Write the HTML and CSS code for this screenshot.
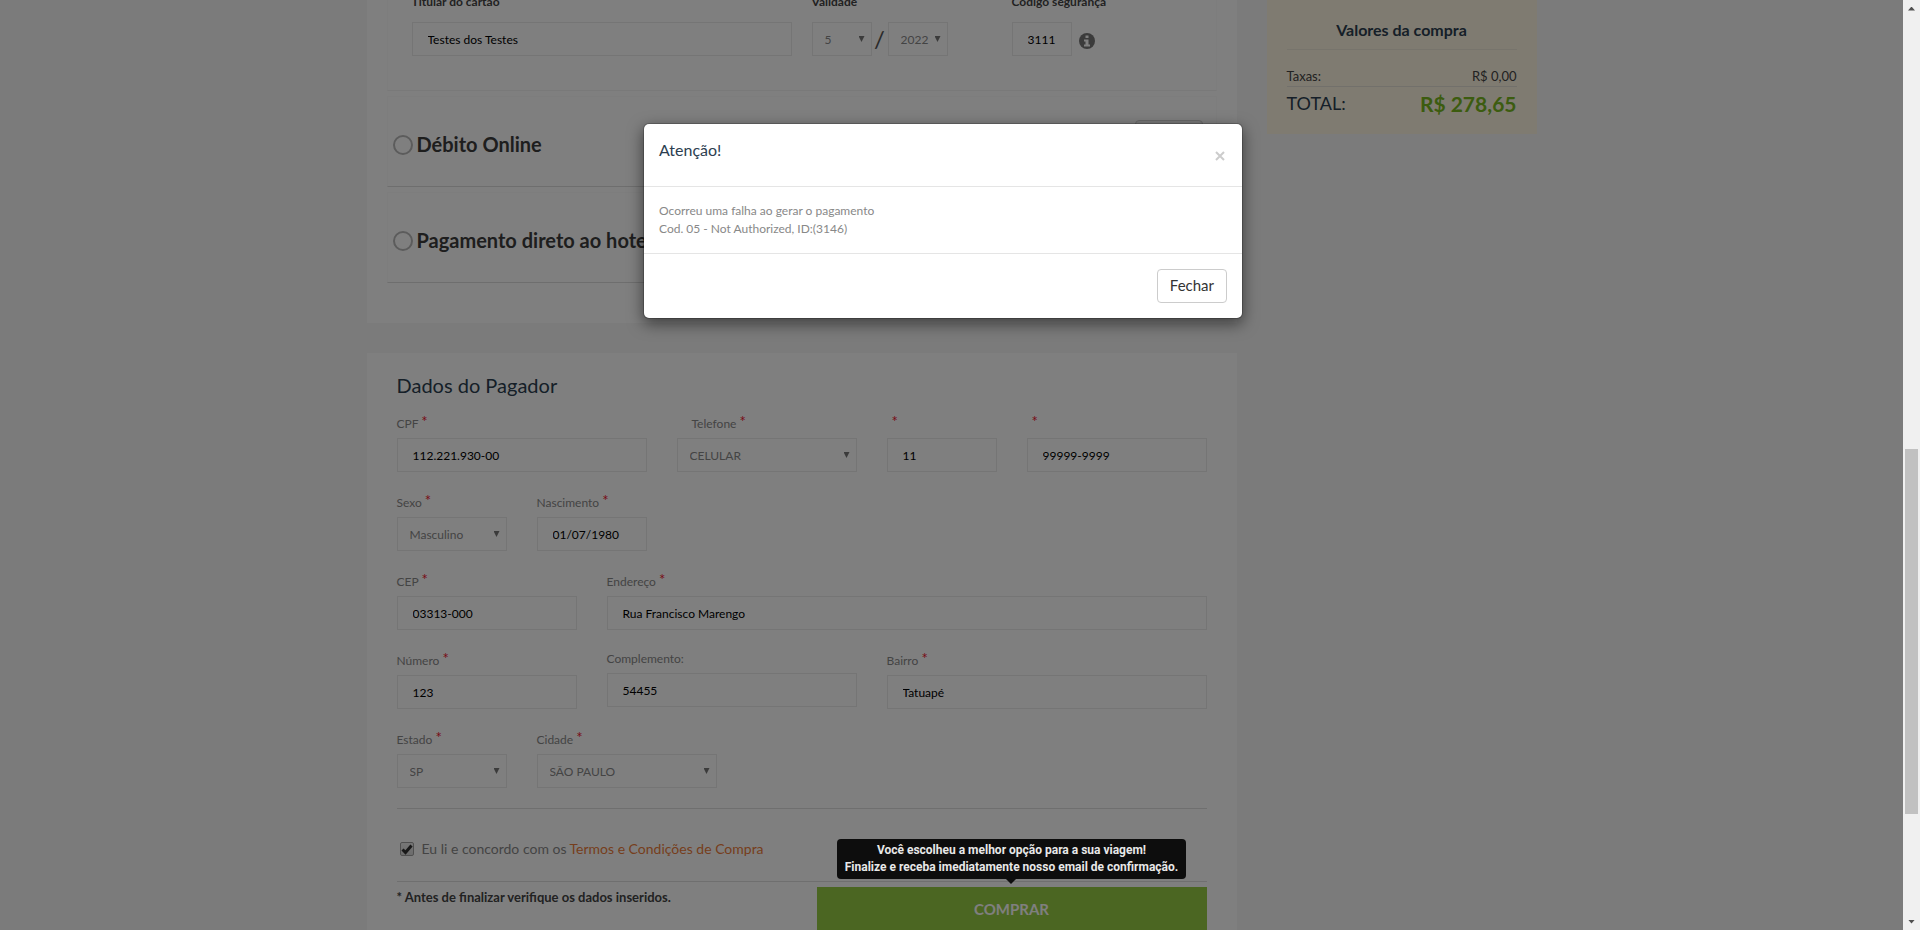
FILE: index.html
```html
<!DOCTYPE html>
<html lang="pt-BR">
<head>
<meta charset="utf-8">
<title>Pagamento</title>
<link rel="stylesheet" href="styles.css">
</head>
<body>
<div class="window">
  <div class="page">
    <div class="container">
      <main class="main">
        <section class="card card-methods">
          <div class="method method-open">
            <div class="card-fields">
              <div class="cf cf-name">
                <label for="titular">Titular do cartão</label>
                <input id="titular" class="control" type="text" value="Testes dos Testes">
              </div>
              <div class="cf cf-date">
                <label for="mes">Validade</label>
                <div class="date-row">
                  <span class="select"><select id="mes" class="control"><option>5</option></select></span>
                  <span class="slash">/</span>
                  <span class="select"><select class="control" aria-label="Ano"><option>2022</option></select></span>
                </div>
              </div>
              <div class="cf">
                <label for="cvv">Código segurança</label>
                <div class="cvv-row">
                  <input id="cvv" class="control" type="text" value="3111">
                  <svg class="info" viewBox="0 0 16 16" aria-hidden="true"><circle cx="8" cy="8" r="8"/><path d="M6.500 2.500h3v2.500h-3zM5 6.500h4.500v5H11v2H5v-2h1.500V8.500H5z"/></svg>
                </div>
              </div>
            </div>
          </div>
          <div class="method">
            <input type="radio" name="metodo" id="debito"><label for="debito">Débito Online</label>
            <span class="method-tag"></span>
          </div>
          <div class="method">
            <input type="radio" name="metodo" id="hotel"><label for="hotel">Pagamento direto ao hotel</label>
          </div>
        </section>

        <section class="card card-payer">
          <h2>Dados do Pagador</h2>
          <form class="form">
            <div class="row">
              <div class="field s4"><label for="cpf">CPF <sup>*</sup></label><input id="cpf" class="control" type="text" value="112.221.930-00"></div>
              <div class="field s3"><label for="fone" class="indent">Telefone <sup>*</sup></label><span class="select"><select id="fone" class="control"><option>CELULAR</option></select></span></div>
              <div class="field s2"><label for="ddd" class="star">&nbsp;<sup>*</sup></label><input id="ddd" class="control" type="text" value="11"></div>
              <div class="field s3"><label for="num-fone" class="star">&nbsp;<sup>*</sup></label><input id="num-fone" class="control" type="text" value="99999-9999"></div>
            </div>
            <div class="row">
              <div class="field s2"><label for="sexo">Sexo <sup>*</sup></label><span class="select"><select id="sexo" class="control"><option>Masculino</option></select></span></div>
              <div class="field s2"><label for="nasc">Nascimento <sup>*</sup></label><input id="nasc" class="control" type="text" value="01/07/1980"></div>
            </div>
            <div class="row">
              <div class="field s3"><label for="cep">CEP <sup>*</sup></label><input id="cep" class="control" type="text" value="03313-000"></div>
              <div class="field s9"><label for="end">Endereço <sup>*</sup></label><input id="end" class="control" type="text" value="Rua Francisco Marengo"></div>
            </div>
            <div class="row">
              <div class="field s3"><label for="numero">Número <sup>*</sup></label><input id="numero" class="control" type="text" value="123"></div>
              <div class="field s4 optional"><label for="compl">Complemento:</label><input id="compl" class="control" type="text" value="54455"></div>
              <div class="field s5"><label for="bairro">Bairro <sup>*</sup></label><input id="bairro" class="control" type="text" value="Tatuapé"></div>
            </div>
            <div class="row">
              <div class="field s2"><label for="uf">Estado <sup>*</sup></label><span class="select"><select id="uf" class="control"><option>SP</option></select></span></div>
              <div class="field s3"><label for="cidade">Cidade <sup>*</sup></label><span class="select"><select id="cidade" class="control"><option>SÃO PAULO</option></select></span></div>
            </div>
            <div class="terms">
              <span class="check"><input type="checkbox" id="aceite" checked><svg viewBox="0 0 14 14" aria-hidden="true"><path d="M2.500 7.500l3 3L11.500 3.500" /></svg></span>
              <label for="aceite">Eu li e concordo com os</label>
              <a href="#termos">Termos e Condições de Compra</a>
            </div>
            <div class="finish">
              <p>* Antes de finalizar verifique os dados inseridos.</p>
              <button type="button" class="buy">COMPRAR</button>
            </div>
          </form>
        </section>
      </main>

      <aside class="summary">
        <h3>Valores da compra</h3>
        <dl>
          <div class="fees"><dt>Taxas:</dt><dd>R$ 0,00</dd></div>
          <div class="total"><dt>TOTAL:</dt><dd>R$ 278,65</dd></div>
        </dl>
      </aside>
    </div>

    <div class="backdrop">
      <div class="modal" role="dialog" aria-labelledby="modal-title">
        <header>
          <h4 id="modal-title">Atenção!</h4>
          <button type="button" class="close" aria-label="Fechar janela"><svg viewBox="0 0 10 10" aria-hidden="true"><path d="M1 1l8 8M9 1L1 9"/></svg></button>
        </header>
        <p>Ocorreu uma falha ao gerar o pagamento<br>Cod. 05 - Not Authorized, ID:(3146)</p>
        <footer><button type="button" class="btn">Fechar</button></footer>
      </div>
    </div>
    <div class="tip-layer container">
      <div class="tip-col"><div class="tooltip" role="tooltip">Você escolheu a melhor opção para a sua viagem!<br>Finalize e receba imediatamente nosso email de confirmação.</div></div>
    </div>
  </div>

  <div class="scrollbar" aria-hidden="true">
    <span class="arrow up"></span>
    <span class="track"><span class="thumb"></span></span>
    <span class="arrow down"></span>
  </div>
</div>
</body>
</html>
```
FILE: styles.css
```css
* { box-sizing: border-box; }

body {
  margin: 0;
  font-family: Lato, "Liberation Sans", sans-serif;
  font-size: 12px;
  color: #888;
  background: #f7f7f7;
}

h2, h3, h4, p, dl, dd { margin: 0; }
button, input, select { font-family: inherit; }

.window { display: flex; height: 100vh; overflow: hidden; }
.page { position: relative; flex: 1; overflow: hidden; }

.container {
  display: grid;
  grid-template-columns: minmax(0, 29fr) minmax(0, 9fr);
  gap: 30px;
  align-items: start;
  max-width: 1170px;
  margin: 0 auto;
}

/* the page is scrolled: the first card starts above the window */
.main { display: flex; flex-direction: column; gap: 30px; margin-top: -10px; }
.card { background: #fff; padding: 0 20px; }
.card-methods { padding-bottom: 40px; }

/* payment methods */
.method {
  position: relative;
  display: flex;
  align-items: center;
  gap: 4px;
  height: 91px;
  margin-top: 5px;
  padding: 7px 5px 0;
  border: 1px solid #fafafa;
  border-bottom-color: #dcdcdc;
}
.method-open { display: block; height: 101px; margin-top: 0; padding: 0 24px; border-bottom-color: #f3f3f3; }
.method > label { font-size: 20px; font-weight: 700; color: #3c3c3c; line-height: 24px; padding-bottom: 3px; }
.method input[type="radio"] {
  appearance: none;
  width: 20px;
  height: 20px;
  margin: 0;
  border: 2px solid #b8b8b8;
  border-radius: 50%;
}
.method-tag {
  position: absolute;
  top: 23px;
  right: 13px;
  width: 68px;
  height: 30px;
  border: 1px solid #d0d0d0;
  border-radius: 4px;
  background: #f0f0f0;
}

.card-fields { display: flex; gap: 20px; }
.cf { display: flex; flex-direction: column; gap: 11px; }
.cf label { height: 20px; line-height: 22px; font-weight: 700; color: #444; white-space: nowrap; }
.cf-name { flex: 0 1 380px; }
.cf-date { flex: 0 0 180px; }
.date-row, .cvv-row { display: flex; align-items: center; }
.date-row .select, .cvv-row .control { width: 60px; }
.slash { width: 16px; text-align: center; font-size: 24px; line-height: 34px; color: #555; }
.info { width: 16px; height: 16px; margin: 4px 0 0 7px; fill: #777; }
.info path { fill: #fff; }

/* shared form controls */
.control {
  display: block;
  width: 100%;
  height: 34px;
  margin: 0;
  padding: 0 15px;
  border: 1px solid #ebebeb;
  border-radius: 0;
  background: #fff;
  color: #000;
  font-size: 12px;
}
select.control { appearance: none; padding: 0 12px; color: #888; }
.select { position: relative; display: block; }
.select::after {
  content: "";
  position: absolute;
  top: 14px;
  right: 7px;
  width: 6px;
  height: 6px;
  background: #777;
  clip-path: polygon(0 0, 100% 0, 50% 100%);
  pointer-events: none;
}

/* payer data */
.card-payer { padding: 0 30px 40px; }
.card-payer h2 { padding: 19px 0 14px; font-size: 20px; line-height: 26px; font-weight: 400; color: #2c3e50; }
.row { display: grid; grid-template-columns: repeat(12, minmax(0, 1fr)); column-gap: 30px; padding-bottom: 19px; }
.s2 { grid-column: span 2; }
.s3 { grid-column: span 3; }
.s4 { grid-column: span 4; }
.s5 { grid-column: span 5; }
.s9 { grid-column: span 9; }
.field label { display: block; height: 26px; line-height: 24px; white-space: nowrap; }
.field .indent { padding-left: 15px; }
.field .star { padding-left: 2px; }
.field sup { color: #f0142d; font-size: 15px; line-height: 0; vertical-align: 1px; }
.field.optional label { height: 24px; line-height: 20px; }

.terms {
  display: flex;
  align-items: center;
  gap: 3px;
  height: 74px;
  margin-top: 1px;
  padding: 7px 3px 0;
  border-top: 1px solid #dedede;
  border-bottom: 1px solid #dedede;
  font-size: 14px;
}
.terms a { color: #ed7d3a; text-decoration: none; }
.check { position: relative; width: 14px; height: 14px; margin-right: 5px; }
.check input {
  appearance: none;
  display: block;
  width: 14px;
  height: 14px;
  margin: 0;
  border: 1px solid #a0a0a0;
  border-radius: 2px;
  background: linear-gradient(#eee, #d8d8d8);
}
.check svg { position: absolute; inset: 0; fill: none; stroke: #333; stroke-width: 3; pointer-events: none; }

.finish { display: grid; grid-template-columns: minmax(0, 14fr) minmax(0, 13fr); align-items: start; padding-top: 5px; }
.finish p { font-size: 13px; line-height: 20px; font-weight: 700; color: #444; }
.buy { height: 44px; border: 0; background: #96cc44; color: #fff; font-size: 15px; font-weight: 700; }

/* order summary */
.summary { background: #fff7e3; padding: 18px 20px 13px; color: #444; }
.summary h3 { padding-bottom: 7px; border-bottom: 1px solid #eee8d8; text-align: center; font-size: 16px; line-height: 24px; color: #2c3e50; }
.fees, .total { display: flex; justify-content: space-between; }
.fees { padding-top: 16px; border-bottom: 1px solid #e4e0d6; font-size: 13px; line-height: 20px; }
.total { font-size: 18px; line-height: 32px; color: #2c3e50; }
.total dd { font-size: 21px; line-height: 34px; font-weight: 700; color: #78b81e; }

/* modal */
.backdrop {
  position: absolute;
  inset: 0;
  display: flex;
  justify-content: center;
  align-items: flex-start;
  padding: 123px 17px 0 0;
  background: rgba(0, 0, 0, .5);
}
.modal {
  width: 600px;
  border: 1px solid rgba(0, 0, 0, .2);
  border-radius: 6px;
  background: #fff;
  background-clip: padding-box;
  box-shadow: 0 5px 15px rgba(0, 0, 0, .5);
}
.modal header { display: flex; justify-content: space-between; align-items: flex-start; height: 63px; padding: 15px; border-bottom: 1px solid #e5e5e5; }
.modal h4 { font-size: 16px; line-height: 22px; font-weight: 400; color: #2c3e50; }
.close { padding: 12px 2px 0; border: 0; background: none; line-height: 0; }
.close svg { width: 10px; height: 10px; stroke: #ccc; stroke-width: 2; fill: none; }
.modal p { padding: 15px; font-size: 12px; line-height: 18px; }
.modal footer { display: flex; justify-content: flex-end; padding: 15px; border-top: 1px solid #e5e5e5; }
.btn { height: 34px; padding: 0 12px 2px; border: 1px solid #ccc; border-radius: 4px; background: #fff; color: #333; font-size: 15px; }

/* tooltip over the buy button */
.tip-layer { position: absolute; left: 0; right: 0; bottom: 51px; pointer-events: none; }
.tip-col { display: flex; justify-content: center; padding: 0 30px 0 450px; }
.tooltip {
  position: relative;
  flex: none;
  padding: 3px 8px;
  border-radius: 4px;
  background: #0d0d0d;
  color: #e8e8e8;
  font-family: Roboto, "Liberation Sans", sans-serif;
  font-size: 12px;
  font-weight: 700;
  line-height: 17px;
  text-align: center;
  white-space: nowrap;
}
.tooltip::after {
  content: "";
  position: absolute;
  top: 100%;
  left: 50%;
  margin-left: -5px;
  border: 5px solid transparent;
  border-top-color: #0d0d0d;
  border-bottom: 0;
}

/* window scrollbar */
.scrollbar { display: flex; flex-direction: column; width: 17px; background: #f0f0f0; }
.arrow { flex: none; height: 17px; display: flex; justify-content: center; align-items: center; }
.arrow::before { content: ""; width: 7px; height: 4px; background: #505050; }
.up::before { clip-path: polygon(50% 0, 100% 100%, 0 100%); }
.down::before { clip-path: polygon(0 0, 100% 0, 50% 100%); }
.track { flex: 1; display: flex; flex-direction: column; padding: 0 2px; }
.track::before { content: ""; flex: 432; }
.thumb { flex: 365; background: #c1c1c1; }
.track::after { content: ""; flex: 99; }
```
